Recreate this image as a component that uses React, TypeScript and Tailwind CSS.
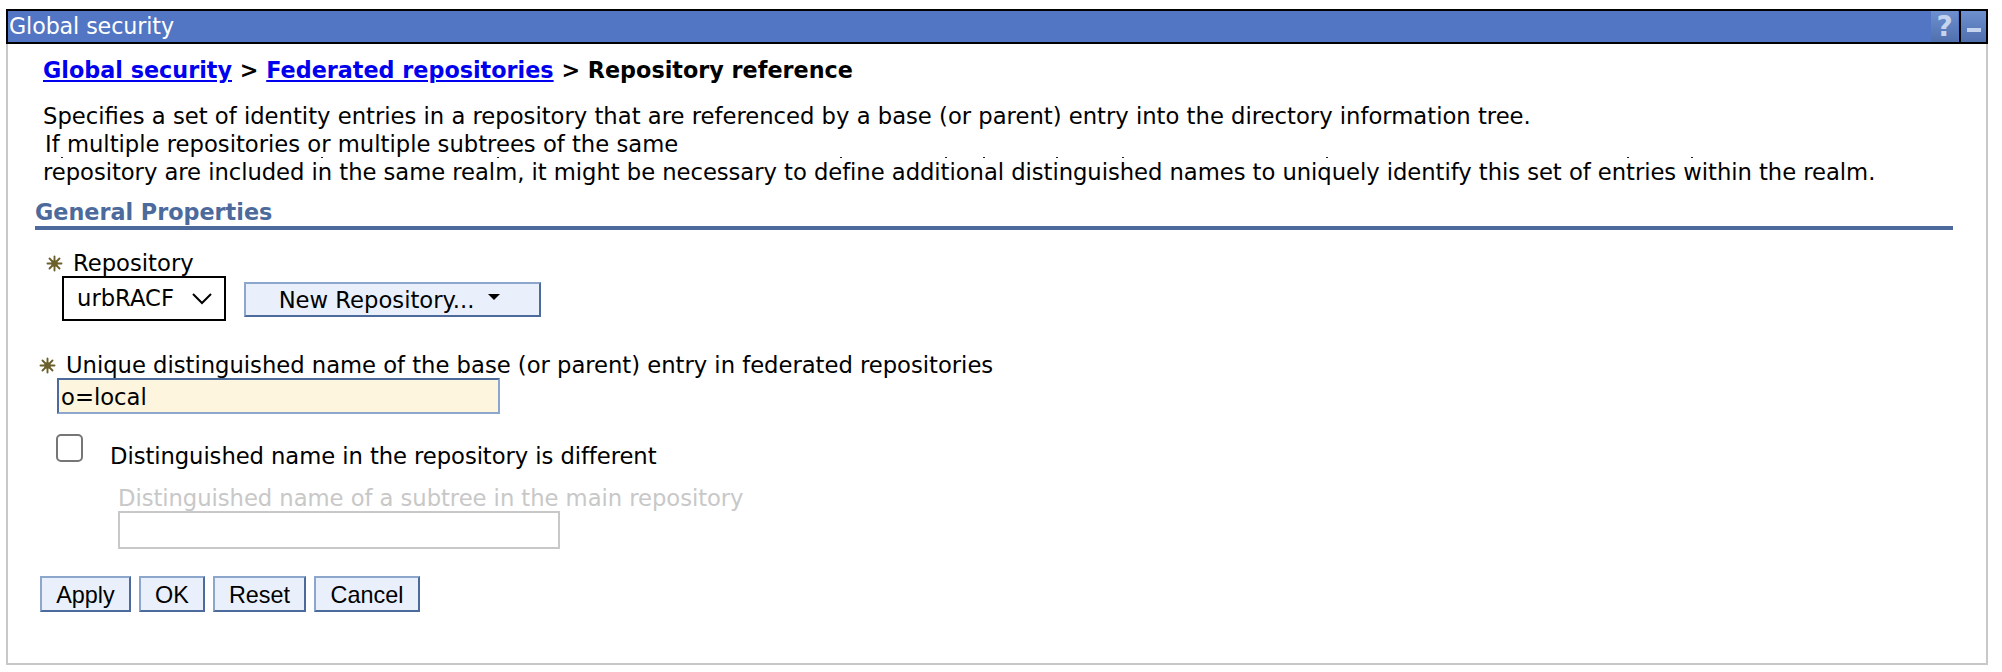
import React from 'react';

const FONT = "font-['DejaVu_Sans',sans-serif]";
const BEVEL = 'border-2 border-t-[#8ca6cc] border-l-[#8ca6cc] border-r-[#4c6a9c] border-b-[#4c6a9c]';

// stray i-dots left above the third description line in the original
const DOTS = [61, 321, 497, 840, 945, 983, 1056, 1122, 1326, 1627, 1691];

function Required() {
  return (
    <svg width="17" height="17" viewBox="0 0 17 17" className="shrink-0">
      <g stroke="#6b5f2a" strokeWidth="1.9" strokeLinecap="round">
        <path d="M8.5 1.5v14M1.5 8.5h14M3.5 3.5l10 10M13.5 3.5l-10 10" />
      </g>
      <circle cx="8.5" cy="8.5" r="3.2" fill="#6b5f2a" />
    </svg>
  );
}

export default function App() {
  return (
    <div className={`w-[2002px] h-[672px] bg-white pt-[9px] pl-[6px] text-black text-[22.7px] ${FONT}`}>
      <div className="w-[1982px] h-[656px] border-x-2 border-b-2 border-[#c8c8c8]">
        <div className="-mx-[2px] h-[35px] bg-[#5276c4] border-2 border-black flex items-center justify-between">
          <span className="pl-[1px] mt-[1px] text-white text-[22.2px] tracking-[-0.1px]">Global security</span>
          <div className="flex h-full">
            <span className="w-[27px] mr-[1px] flex items-center justify-center bg-gradient-to-b from-[#6f90cf] to-[#4f70ad] text-[#c5d4ee] font-bold text-[28px] leading-none">?</span>
            <span className="w-[27px] border-l-2 border-black flex items-center justify-center bg-gradient-to-b from-[#6f90cf] to-[#4f70ad]">
              <span className="block w-[14px] h-[4px] mt-[6px] bg-[#c5d4ee]" />
            </span>
          </div>
        </div>

        <div className="pl-[35px] pt-[13px] font-bold text-[22.3px] leading-[26px]">
          <a href="#" className="text-[#0000ee] underline">Global security</a>
          {' > '}
          <a href="#" className="text-[#0000ee] underline">Federated repositories</a>
          {' > Repository reference'}
        </div>

        <div className="relative pl-[35px] pt-[19px] leading-[28px]">
          <div>Specifies a set of identity entries in a repository that are referenced by a base (or parent) entry into the directory information tree.</div>
          <div className="pl-[2px]">If multiple repositories or multiple subtrees of the same</div>
          <div className="tracking-[-0.046px]">repository are included in the same realm, it might be necessary to define additional distinguished names to uniquely identify this set of entries within the realm.</div>
          {DOTS.map(x => (
            <span key={x} className="absolute top-[74px] w-[2px] h-[1px] bg-[#222]" style={{ left: x - 8 }} />
          ))}
        </div>

        <div className="ml-[27px] w-[1918px] mt-[12px] border-b-[4px] border-[#4c6a9c] text-[#4c6a9c] font-bold text-[22.3px] leading-[28px] h-[32px]">
          General Properties
        </div>

        <div className="pl-[38px] pt-[20px]">
          <div className="flex items-center gap-[10px] h-[26px]">
            <Required />
            <span>Repository</span>
          </div>
          <div className="flex items-center ml-[16px]">
            <div className="w-[164px] h-[45px] border-2 border-black flex items-center justify-between pl-[13px] pr-[11px]">
              <span>urbRACF</span>
              <svg width="22" height="13" viewBox="0 0 22 13" fill="none" stroke="#000" strokeWidth="2">
                <path d="M2 2l9 9 9-9" />
              </svg>
            </div>
            <button className={`ml-[18px] w-[297px] h-[35px] mt-[1px] pt-[2px] bg-[#e9f0fb] flex items-center justify-center gap-[14px] pr-[6px] ${BEVEL}`}>
              <span>New Repository...</span>
              <span className="w-0 h-0 mb-[6px] border-x-[6px] border-x-transparent border-t-[6px] border-t-black" />
            </button>
          </div>
        </div>

        <div className="pl-[31px] pt-[31px]">
          <div className="flex items-center gap-[10px] h-[26px] tracking-[-0.02px]">
            <Required />
            <span>Unique distinguished name of the base (or parent) entry in federated repositories</span>
          </div>
          <div className="ml-[18px] w-[443px] h-[36px] bg-[#fdf5dd] border-2 border-t-[#4c6a9c] border-l-[#4c6a9c] border-r-[#8ca6cc] border-b-[#8ca6cc] pl-[2px] leading-[34px]">
            o=local
          </div>
        </div>

        <div className="pl-[48px] pt-[20px]">
          <div className="flex items-start h-[38px]">
            <span className="block w-[27px] h-[28px] border-2 border-[#767676] rounded-[5px] bg-white" />
            <span className="ml-[27px] mt-[9px] leading-[26px] tracking-[-0.07px]">Distinguished name in the repository is different</span>
          </div>
          <div className="ml-[62px] pt-[14px] text-[#c8c8c8] leading-[25px] tracking-[-0.05px]">Distinguished name of a subtree in the main repository</div>
          <div className="ml-[62px] w-[442px] h-[38px] border-2 border-[#c8c8c8]" />
        </div>

        <div className="pl-[32px] pt-[27px] flex gap-[8px] font-['Liberation_Sans',sans-serif] text-[23.4px]">
          <button className={`w-[91px] h-[36px] pb-[2px] bg-[#e9f0fb] ${BEVEL}`}>Apply</button>
          <button className={`w-[66px] h-[36px] pb-[2px] bg-[#e9f0fb] ${BEVEL}`}>OK</button>
          <button className={`w-[93px] h-[36px] pb-[2px] bg-[#e9f0fb] ${BEVEL}`}>Reset</button>
          <button className={`w-[106px] h-[36px] pb-[2px] bg-[#e9f0fb] ${BEVEL}`}>Cancel</button>
        </div>
      </div>
    </div>
  );
}
